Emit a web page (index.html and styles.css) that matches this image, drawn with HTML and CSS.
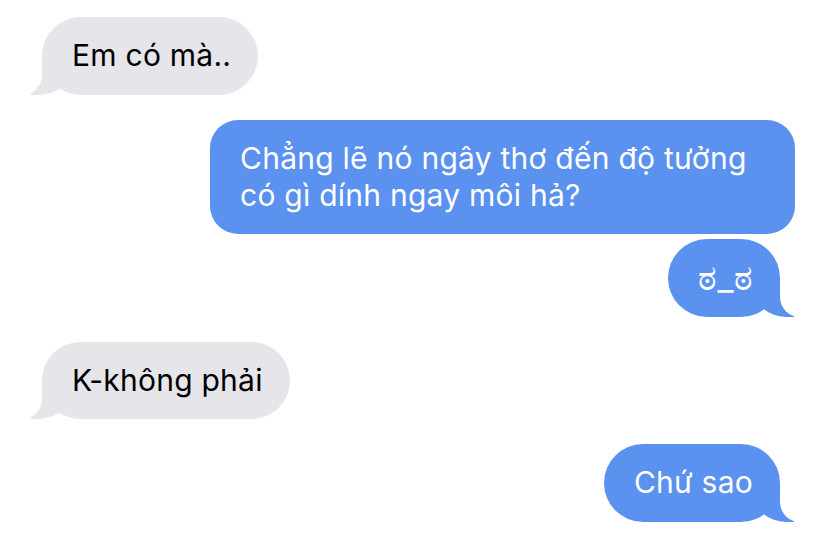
FILE: index.html
```html
<!DOCTYPE html>
<html lang="vi">
<head>
<meta charset="utf-8">
<title>Tin nhắn</title>
<link rel="stylesheet" href="styles.css">
</head>
<body>
<main class="thread">
  <div class="bubble them tail">Em có mà..</div>
  <div class="group">
    <div class="bubble me">Chẳng lẽ nó ngây thơ đến độ tưởng có gì dính ngay môi hả?</div>
    <div class="bubble me tail face">ಠ_ಠ</div>
  </div>
  <div class="bubble them tail">K-không phải</div>
  <div class="bubble me tail">Chứ sao</div>
</main>
</body>
</html>
```
FILE: styles.css
```css
* { box-sizing: border-box; }
html, body { margin: 0; background: #ffffff; }
body {
  font-family: Inter, "Noto Sans", "DejaVu Sans", sans-serif;
  font-size: 30px;
  letter-spacing: 0.25px;
  -webkit-font-smoothing: antialiased;
}
.thread {
  display: flex;
  flex-direction: column;
  align-items: flex-start;
  gap: 25px;
  padding: 17px 33px 0 42px;
}
.group {
  display: flex;
  flex-direction: column;
  align-items: flex-end;
  gap: 5px;
  align-self: stretch;
}
.bubble {
  position: relative;
  max-width: 585px;
  padding: 20px 27px 20.5px 30px;
  line-height: 37px;
  border-radius: 28px;
}
.bubble.tail { border-radius: 39px; }
.face { font-size: 35px; }
.them {
  background: #e5e5ea;
  color: #000;
  align-self: flex-start;
}
.me {
  background: #5b91ef;
  color: #fff;
  align-self: flex-end;
}
.me.tail { margin-right: 15px; }
.tail::before,
.tail::after {
  content: "";
  position: absolute;
  bottom: 0;
  height: 40px;
}
.me.tail::before {
  right: -14px;
  width: 40px;
  background: #5b91ef;
  border-bottom-left-radius: 32px 28px;
}
.me.tail::after {
  right: -52px;
  width: 52px;
  background: #fff;
  border-bottom-left-radius: 20px;
}
.them.tail::before {
  left: -11px;
  width: 40px;
  background: #e5e5ea;
  border-bottom-right-radius: 32px 28px;
}
.them.tail::after {
  left: -52px;
  width: 52px;
  background: #fff;
  border-bottom-right-radius: 20px;
}
```
